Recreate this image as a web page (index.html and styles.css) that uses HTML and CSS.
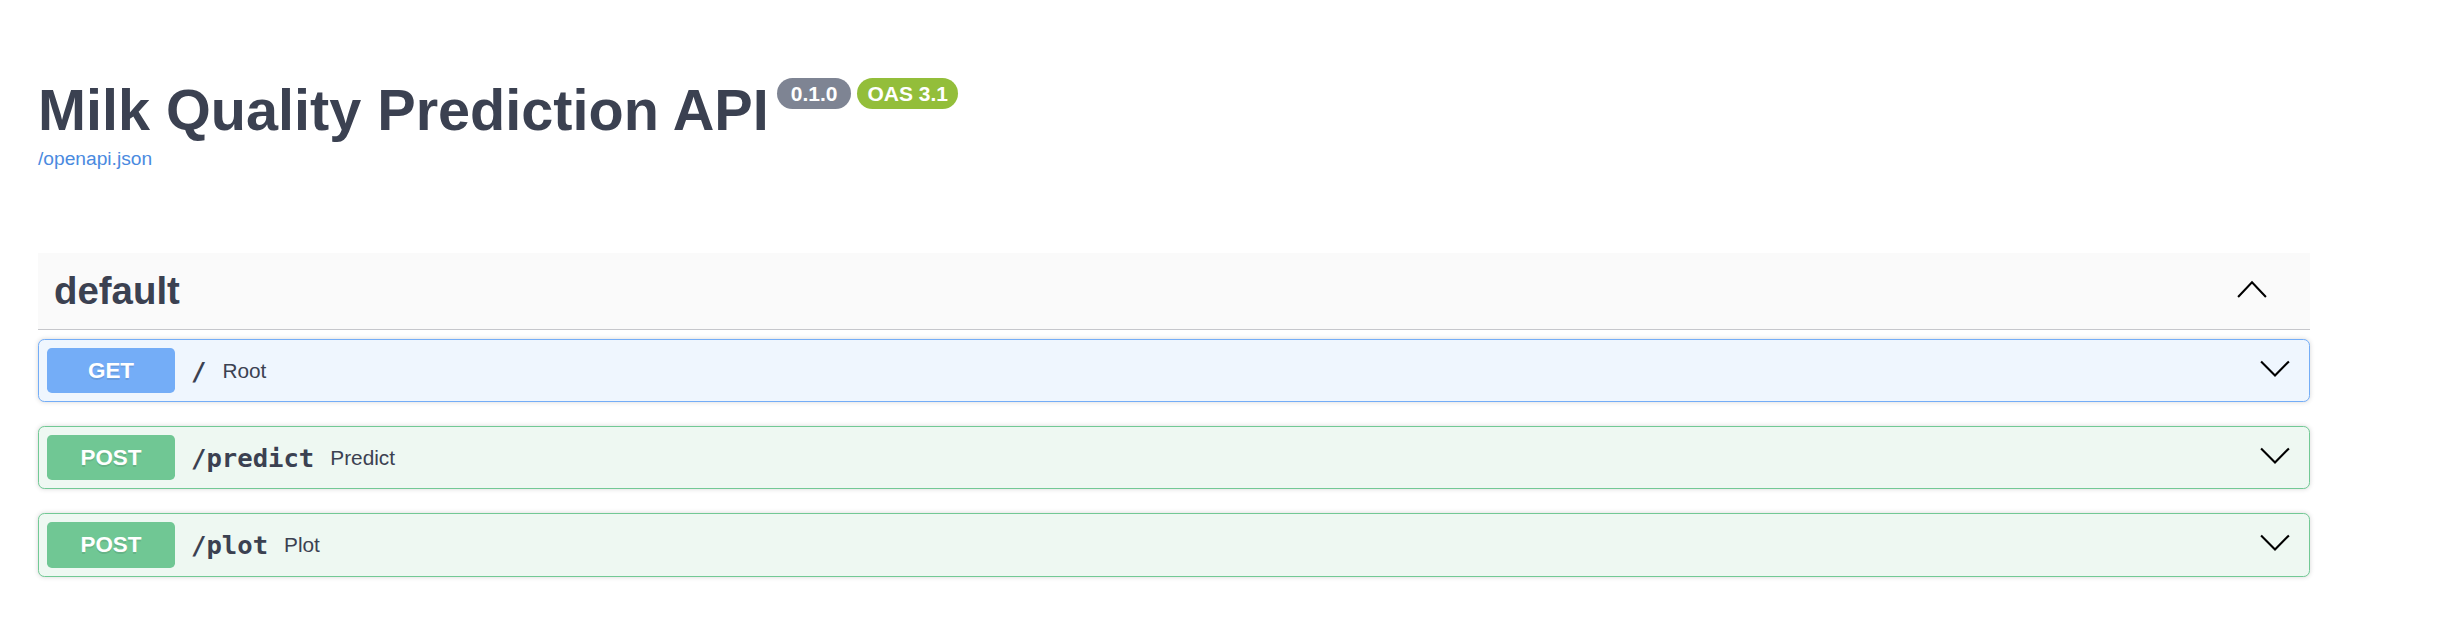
FILE: index.html
```html
<!DOCTYPE html>
<html lang="en">
<head>
<meta charset="utf-8">
<title>Milk Quality Prediction API - Swagger UI</title>
<link rel="stylesheet" href="styles.css">
</head>
<body>
<div class="wrapper">
  <div class="info">
    <div class="title-row">
      <h2 class="title">Milk Quality Prediction API</h2>
      <span class="badge badge-version">0.1.0</span>
      <span class="badge badge-oas">OAS 3.1</span>
    </div>
    <a class="link" href="#">/openapi.json</a>
  </div>

  <div class="tag-section">
    <h3 class="tag">
      <span class="tag-name">default</span>
      <span class="expand">
        <svg class="arrow" width="32" height="32" viewBox="0 0 20 20"><polyline points="1.3,13.8 10,4.6 18.7,13.8" fill="none" stroke="#000" stroke-width="1.3"/></svg>
      </span>
    </h3>

    <div class="opblock opblock-get">
      <span class="method">GET</span>
      <span class="path">/</span>
      <span class="desc">Root</span>
      <span class="control">
        <svg class="arrow" width="32" height="32" viewBox="0 0 20 20"><polyline points="1.3,4.0 10,12.8 18.7,4.0" fill="none" stroke="#000" stroke-width="1.3"/></svg>
      </span>
    </div>

    <div class="opblock opblock-post">
      <span class="method">POST</span>
      <span class="path">/predict</span>
      <span class="desc">Predict</span>
      <span class="control">
        <svg class="arrow" width="32" height="32" viewBox="0 0 20 20"><polyline points="1.3,4.0 10,12.8 18.7,4.0" fill="none" stroke="#000" stroke-width="1.3"/></svg>
      </span>
    </div>

    <div class="opblock opblock-post">
      <span class="method">POST</span>
      <span class="path">/plot</span>
      <span class="desc">Plot</span>
      <span class="control">
        <svg class="arrow" width="32" height="32" viewBox="0 0 20 20"><polyline points="1.3,4.0 10,12.8 18.7,4.0" fill="none" stroke="#000" stroke-width="1.3"/></svg>
      </span>
    </div>
  </div>
</div>
</body>
</html>
```
FILE: styles.css
```css
html, body {
  margin: 0;
  padding: 0;
  background: #fff;
}

body {
  font-family: "Liberation Sans", Arial, Helvetica, sans-serif;
  color: #3b4151;
}

.wrapper {
  width: 2272px;
  padding: 0 0 0 38px;
}

.info {
  padding-top: 77px;
  margin-bottom: 83px;
}

.title-row {
  display: flex;
  align-items: flex-start;
}

.title {
  margin: 0;
  font-size: 57.6px;
  font-weight: 700;
  color: #3b4151;
  line-height: normal;
}

.badge {
  margin: 1px 0 0 8px;
  height: 31px;
  display: flex;
  align-items: center;
  border-radius: 91px;
  color: #fff;
  font-size: 21px;
  font-weight: 700;
  font-family: "Liberation Sans", Arial, sans-serif;
}

.badge-version {
  background: #7e8493;
  padding: 0 14px;
}

.badge-oas {
  background: #93be3a;
  padding: 0 10px;
  margin-left: 6px;
}

.link {
  display: inline-block;
  margin-top: 5px;
  font-size: 19.2px;
  color: #4a8ae0;
  text-decoration: none;
  line-height: normal;
}

.tag {
  display: flex;
  align-items: center;
  margin: 0 0 9px 0;
  padding: 16px 32px 16px 16px;
  background: #fafafa;
  border-bottom: 1px solid #c6c7cb;
  font-size: 38.4px;
  font-weight: 700;
  color: #3b4151;
  line-height: normal;
}

.tag-name {
  flex: 1 1 auto;
}

.expand {
  display: flex;
  padding: 0 10px 0 0;
}

.arrow {
  display: block;
}

.opblock {
  display: flex;
  align-items: center;
  margin: 0 0 24px 0;
  padding: 8px;
  border-radius: 6.4px;
  box-shadow: 0 0 4.8px rgba(0, 0, 0, 0.16);
}

.opblock-get {
  background: #eff6fe;
  border: 1px solid #74adf7;
}

.opblock-post {
  background: #eef8f2;
  border: 1px solid #72c995;
}

.method {
  min-width: 128px;
  padding: 9.6px 0;
  border-radius: 4.8px;
  color: #fff;
  font-size: 22.4px;
  font-weight: 700;
  text-align: center;
  line-height: normal;
  text-shadow: 0 1.6px 0 rgba(0, 0, 0, 0.1);
}

.opblock-get .method {
  background: #74adf7;
}

.opblock-post .method {
  background: #70c794;
}

.path {
  padding: 0 16px;
  font-family: "DejaVu Sans Mono", "Liberation Mono", monospace;
  font-size: 25.6px;
  font-weight: 700;
  color: #3b4151;
}

.desc {
  flex: 1 1 auto;
  font-size: 20.8px;
  color: #3b4151;
}

.control {
  display: flex;
  padding-right: 10px;
}
```
